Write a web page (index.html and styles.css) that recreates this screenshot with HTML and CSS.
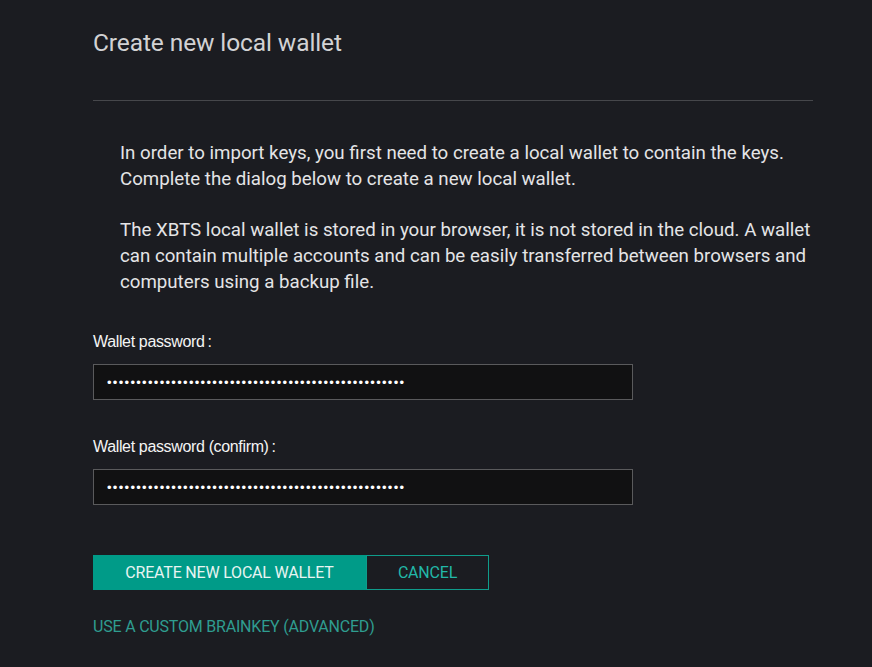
FILE: index.html
```html
<!DOCTYPE html>
<html>
<head>
<meta charset="utf-8">
<link rel="stylesheet" href="styles.css">
</head>
<body>
<div class="page">
  <h3 class="title">Create new local wallet</h3>
  <hr class="rule">
  <div class="intro">
    <p>In order to import keys, you first need to create a local wallet to contain the keys. Complete the dialog below to create a new local wallet.</p>
    <p>The XBTS local wallet is stored in your browser, it is not stored in the cloud. A wallet can contain multiple accounts and can be easily transferred between browsers and computers using a backup file.</p>
  </div>
  <form class="form">
    <label class="field">
      <span class="label">Wallet password&thinsp;:</span>
      <input class="input" type="password" value="aaaaaaaaaaaaaaaaaaaaaaaaaaaaaaaaaaaaaaaaaaaaaaaaaaa">
    </label>
    <label class="field">
      <span class="label">Wallet password (confirm)&thinsp;:</span>
      <input class="input" type="password" value="aaaaaaaaaaaaaaaaaaaaaaaaaaaaaaaaaaaaaaaaaaaaaaaaaaa">
    </label>
    <div class="buttons">
      <button type="button" class="btn primary">CREATE NEW LOCAL WALLET</button>
      <button type="button" class="btn outline">CANCEL</button>
    </div>
    <a class="link" href="#">USE A CUSTOM BRAINKEY (ADVANCED)</a>
  </form>
</div>
</body>
</html>
```
FILE: styles.css
```css
html, body {
  margin: 0;
  padding: 0;
  background: #1b1c21;
  height: 100%;
}
body {
  font-family: Roboto, "Liberation Sans", sans-serif;
  color: #e6e6e6;
}
.page {
  padding: 28px 59px 0 93px;
  width: 720px;
}
.title {
  margin: 0;
  font-size: 24.5px;
  font-weight: 400;
  color: #d2d2d4;
  line-height: 30px;
  letter-spacing: -0.1px;
}
.rule {
  margin: 42px 0 0;
  border: 0;
  border-top: 1px solid #46474b;
  height: 0;
}
.intro {
  padding: 39px 0 0 27px;
}
.intro p {
  margin: 0 0 25px;
  font-size: 18.7px;
  line-height: 26px;
  color: #e4e4e6;
}
.form {
  display: flex;
  flex-direction: column;
  margin-top: 38px;
}
.field {
  display: flex;
  flex-direction: column;
  margin-bottom: 38px;
}
.label {
  font-family: "Liberation Sans", Arial, sans-serif;
  font-size: 16px;
  letter-spacing: -0.35px;
  color: #f4f4f4;
  line-height: 18px;
  margin-bottom: 13px;
}
.input {
  box-sizing: border-box;
  width: 540px;
  height: 36px;
  background: #111112;
  border: 1px solid #5a5a5c;
  color: #ffffff;
  padding: 0 13px;
  font-family: "Liberation Sans", Arial, sans-serif;
  font-size: 13px;
  letter-spacing: 1.3px;
  outline: none;
}
.buttons {
  display: flex;
  margin-top: 12px;
}
.btn {
  height: 35px;
  box-sizing: border-box;
  font-family: Roboto, "Liberation Sans", sans-serif;
  font-size: 16px;
  letter-spacing: -0.2px;
  padding: 0;
  cursor: pointer;
}
.primary {
  width: 273px;
  background: #009b88;
  border: 1px solid #009b88;
  color: #e8f4f2;
}
.outline {
  width: 123px;
  background: transparent;
  border: 1px solid #0f9c8b;
  color: #22b8a8;
}
.link {
  margin-top: 27px;
  font-size: 16px;
  letter-spacing: -0.2px;
  color: #2f9d90;
  text-decoration: none;
  line-height: 20px;
}
```
